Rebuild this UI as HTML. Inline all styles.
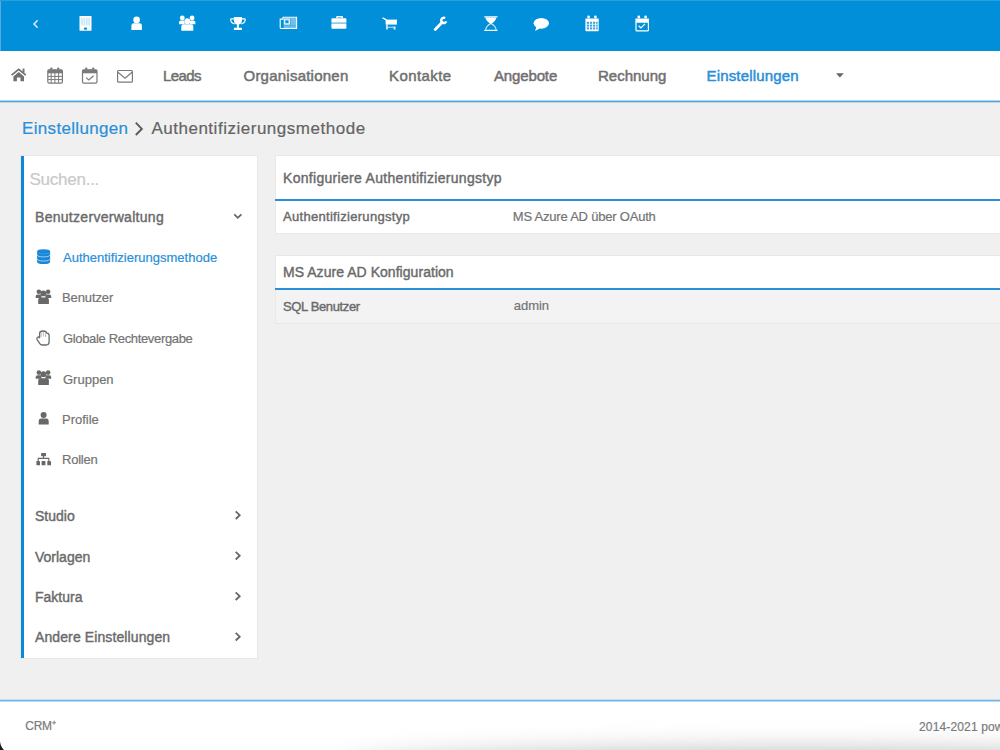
<!DOCTYPE html>
<html><head><meta charset="utf-8">
<style>
*{margin:0;padding:0;box-sizing:border-box}
html,body{width:1000px;height:750px;overflow:hidden}
body{position:relative;background:#f0f0f0;font-family:"Liberation Sans",sans-serif;color:#6b6b6b}
.a{position:absolute;white-space:nowrap}
#ov{position:absolute;left:0;top:0}
</style></head><body>
<div class="a" style="left:0;top:0;width:1000px;height:51px;background:#008fd8"></div>
<div class="a" style="left:0;top:51px;width:1000px;height:50px;background:#fff"></div>
<div class="a" style="left:0;top:0;width:1px;height:51px;background:#5aa9e2"></div>
<div class="a" style="left:0;top:0;width:1000px;height:1px;background:#2a9ddd"></div>
<div class="a" style="left:0;top:100px;width:1000px;height:3px;background:linear-gradient(#b3d6f0 0,#b3d6f0 1px,#52a5df 1px,#52a5df 2px,#bcd8ec 2px)"></div>

<!-- sidebar card -->
<div class="a" style="left:21px;top:156px;width:236px;height:502px;background:#fff;box-shadow:0 0 0 1px #e8e8e8"></div>
<div class="a" style="left:21px;top:156px;width:3px;height:502px;background:#0f87d8"></div>

<!-- panels -->
<div class="a" style="left:276px;top:156px;width:724px;height:77px;background:#fff;box-shadow:0 0 0 1px #e8e8e8"></div>
<div class="a" style="left:275px;top:199px;width:725px;height:2px;background:#2a8fd8"></div>
<div class="a" style="left:276px;top:256px;width:724px;height:67px;background:#fff;box-shadow:0 0 0 1px #e8e8e8"></div>
<div class="a" style="left:276px;top:290px;width:724px;height:33px;background:#f3f3f3"></div>
<div class="a" style="left:275px;top:288px;width:725px;height:2px;background:#2a8fd8"></div>

<!-- footer -->
<div class="a" style="left:0;top:701px;width:1000px;height:49px;background:#fff"></div>
<div class="a" style="left:0;top:699px;width:1000px;height:3px;background:linear-gradient(#c9dfee 0,#c9dfee 1px,#6fb4e4 1px,#6fb4e4 2px,#b5daf2 2px)"></div>

<svg id="ov" width="1000" height="750" viewBox="0 0 1000 750">
 <g fill="#fff" stroke="none">
  <!-- chevron left -->
  <path d="M37.6 20.2L34 24l3.6 3.8" fill="none" stroke="#fff" stroke-width="1.5" opacity=".85"/>
  <!-- building -->
  <rect x="79.5" y="16" width="12" height="14.8" rx=".5"/>
  <g fill="#008fd8" opacity=".22"><rect x="81.2" y="17.5" width="1.6" height="8"/><rect x="83.6" y="17.5" width="1.6" height="8"/><rect x="86" y="17.5" width="1.6" height="8"/><rect x="88.4" y="17.5" width="1.6" height="8"/></g>
  <rect x="83.9" y="27.6" width="3.2" height="2.2" rx="1" fill="#008fd8"/>
  <!-- user -->
  <circle cx="136.6" cy="19.9" r="3.3"/>
  <path d="M131.4 30V25.6q0-2.4 2.4-2.4h5.7q2.4 0 2.4 2.4V30z"/>
  <!-- users -->
  <circle cx="182.3" cy="17.9" r="2.4"/><circle cx="192.1" cy="17.9" r="2.4"/>
  <path d="M179 24.2v-1.8q0-1.9 1.9-1.9h3.2l.8 3.7z"/><path d="M195.4 24.2v-1.8q0-1.9-1.9-1.9h-3.2l-.8 3.7z"/>
  <circle cx="187.3" cy="21.2" r="2.9"/>
  <path d="M181.3 30.8v-4.2q0-2.4 2.4-2.4h7.2q2.4 0 2.4 2.4v4.2z"/>
  <!-- trophy -->
  <path d="M233.9 17h8.1v3q0 3.6-3.1 4.6v3.2h3v2.1h-8v-2.1h3v-3.2q-3-1-3-4.6z"/>
  <path d="M233.9 18.8h-2.6q-.6 0-.6.6q0 3.5 3.9 4.5M242 18.8h2.6q.6 0 .6.6q0 3.5-3.9 4.5" fill="none" stroke="#fff" stroke-width="1.2"/>
  <!-- newspaper -->
  <path d="M283 17.3h13.6v11.2H281q-.8 0-.8-.8v-8.6h2.8z" fill="none" stroke="#fff" stroke-width="1.1"/>
  <rect x="283.6" y="17.8" width="12.4" height="10.2" fill="#fff" opacity=".45"/>
  <circle cx="286.9" cy="21.7" r="1.3" fill="#008fd8"/>
  <path d="M284.4 19.2h5v4.8h-5z" fill="none" stroke="#fff" stroke-width=".9"/>
  <path d="M290.6 19v8M284.3 25.6h4.8M291.6 25.6h4" stroke="#008fd8" stroke-width=".8" opacity=".5"/>
  <!-- briefcase -->
  <path d="M336.2 18.3v-1.4q0-.9.9-.9h5q.9 0 .9.9v1.4h-1.3v-.9h-4.2v.9z"/>
  <path d="M331.4 22.4v-2.9q0-1.2 1.2-1.2h12.6q1.2 0 1.2 1.2v2.9z"/>
  <path d="M331.4 24.1h15v3.6q0 1.1-1.1 1.1h-12.8q-1.1 0-1.1-1.1z"/>
  <rect x="331.4" y="22.4" width="15" height="1.7" opacity=".55"/>
  <!-- cart -->
  <path d="M383 18.1l2.9 1.5" stroke="#fff" stroke-width="1.4" stroke-linecap="round" fill="none"/>
  <path d="M385.6 19.6h11.3v5h-11.3z"/>
  <path d="M386.1 24.6h1.7v5h-1.7zM393.6 26.5h1.9v3.1h-1.9z" opacity=".85"/>
  <rect x="387.8" y="26.6" width="6" height="1.4" opacity=".55"/>
  <!-- wrench -->
  <path d="M445.1 18.15A2.6 2.6 0 1 0 446.24 21.29" fill="none" stroke="#fff" stroke-width="2.4"/>
  <path d="M442.2 22.3l-7 7.1" stroke="#fff" stroke-width="2.8" stroke-linecap="round" fill="none"/>
  <!-- hourglass -->
  <path d="M484.3 16.2h13.2v1.3h-13.2zM484.3 29.7h13.2v1.3h-13.2z"/>
  <path d="M485.4 17.5q.6 3.6 5.5 6.4q4.9-2.8 5.5-6.4z"/>
  <path d="M485.7 29.7q.4-3.9 5.2-6.2q4.8 2.3 5.2 6.2" fill="none" stroke="#fff" stroke-width="1.2" opacity=".8"/>
  <!-- comment -->
  <ellipse cx="541.3" cy="23.3" rx="7.7" ry="5.4"/>
  <path d="M536.3 26.8l-1.2 4.1 4.8-2.4z"/>
  <!-- calendar top -->
  <g>
   <path d="M585.4 18.5h13.3v11.9q0 .8-.8.8h-11.7q-.8 0-.8-.8z"/>
   <circle cx="588.6" cy="17" r="1.4"/><circle cx="595.4" cy="17" r="1.4"/>
   <g fill="#008fd8" opacity=".8">
    <rect x="586.8" y="21.8" width="2.2" height="2"/><rect x="589.9" y="21.8" width="2.2" height="2"/><rect x="593" y="21.8" width="2.2" height="2"/><rect x="596.1" y="21.8" width="1.6" height="2"/>
    <rect x="586.8" y="24.6" width="2.2" height="2"/><rect x="589.9" y="24.6" width="2.2" height="2"/><rect x="593" y="24.6" width="2.2" height="2"/><rect x="596.1" y="24.6" width="1.6" height="2"/>
    <rect x="586.8" y="27.4" width="2.2" height="2"/><rect x="589.9" y="27.4" width="2.2" height="2"/><rect x="593" y="27.4" width="2.2" height="2"/><rect x="596.1" y="27.4" width="1.6" height="2"/>
   </g>
  </g>
  <!-- calendar check top -->
  <g>
   <path d="M635.4 18.5h13.5v4h-13.5z"/>
   <circle cx="638.8" cy="17" r="1.4"/><circle cx="645.6" cy="17" r="1.4"/>
   <rect x="636" y="21.8" width="12.4" height="9" fill="none" stroke="#fff" stroke-width="1.2" rx=".5"/>
   <path d="M638.6 25.7l2.3 2.2 4.1-4.1" fill="none" stroke="#fff" stroke-width="1.2"/>
  </g>
 </g>

 <!-- nav icons gray -->
 <g fill="#707070">
  <path d="M11.6 75.2l7.1-5.8 7.1 5.8" fill="none" stroke="#707070" stroke-width="1.7" stroke-linejoin="miter"/>
  <rect x="22.6" y="68.6" width="1.9" height="4"/>
  <path d="M13.4 76.4l5.3-4.5 5.3 4.5v4.9h-3.5v-3.7h-3.6v3.7h-3.5z"/>
  <!-- calendar -->
  <rect x="47.8" y="69.8" width="14.6" height="13.4" rx="1.4" fill="none" stroke="#7a7a7a" stroke-width="1.2"/>
  <rect x="47.8" y="69.8" width="14.6" height="3.5" fill="#7a7a7a"/>
  <circle cx="51.3" cy="68.6" r="1.2" fill="#7a7a7a"/><circle cx="58.2" cy="68.6" r="1.2" fill="#7a7a7a"/>
  <path d="M48 76.4h14.2M48 79.6h14.2M51.2 73v10M54.9 73v10M58.6 73v10" stroke="#7a7a7a" stroke-width="1"/>
  <!-- calendar check -->
  <rect x="82.5" y="69.8" width="14.5" height="13.4" rx="1.4" fill="none" stroke="#7a7a7a" stroke-width="1.2"/>
  <rect x="82.5" y="69.8" width="14.5" height="3.5" fill="#7a7a7a"/>
  <circle cx="86.2" cy="68.6" r="1.2" fill="#7a7a7a"/><circle cx="93.2" cy="68.6" r="1.2" fill="#7a7a7a"/>
  <path d="M86.1 77.6l2.7 2.4 4.8-4.3" fill="none" stroke="#7a7a7a" stroke-width="1.2"/>
  <!-- envelope -->
  <rect x="117.6" y="70.5" width="14.8" height="11.7" rx="1" fill="none" stroke="#7a7a7a" stroke-width="1.2"/>
  <path d="M117.9 72.2l7.1 6 7.1-6" fill="none" stroke="#7a7a7a" stroke-width="1.2"/>
  <!-- caret -->
  <path d="M836 73.2h7.8l-3.9 4.4z" fill="#666"/>
 </g>

 <!-- breadcrumb chevron -->
 <path d="M135.8 122.6l6 6.3-6 6.1" fill="none" stroke="#5a5a5a" stroke-width="1.9"/>

 <!-- sidebar icons -->
 <g fill="#1a86d6">
  <path d="M37.1 251.5q0-2.3 6.5-2.3t6.5 2.3v10.2q0 2.3-6.5 2.3t-6.5-2.3z"/>
  <path d="M37.1 251.6q0 2.2 6.5 2.2t6.5-2.2" fill="none" stroke="#4aa3e6" stroke-width=".6"/>
  <path d="M37.1 254.5q0 2.4 6.5 2.4t6.5-2.4M37.1 258.6q0 2.4 6.5 2.4t6.5-2.4" fill="none" stroke="#bfe0f7" stroke-width=".8"/>
 </g>
 <g fill="#686868">
  <!-- users -->
  <g id="usr">
   <circle cx="38.9" cy="291.8" r="2.3"/><circle cx="48.1" cy="291.8" r="2.3"/>
   <path d="M35.7 298v-1.6q0-1.9 1.9-1.9h3.6l.4 3.5z"/><path d="M51.2 298v-1.6q0-1.9-1.9-1.9h-3.6l-.4 3.5z"/>
   <circle cx="43.4" cy="293.4" r="2.9"/>
   <path d="M38.2 304.1v-4.2q0-2.5 2.5-2.5h5.7q2.5 0 2.5 2.5v4.2z"/>
  </g>
  <use href="#usr" y="80.8"/>
  <!-- profile -->
  <circle cx="43.6" cy="415.1" r="3"/>
  <path d="M38.7 424.4v-3.4q0-2.4 2.4-2.4h5.2q2.4 0 2.4 2.4v3.4z"/>
  <!-- sitemap -->
  <rect x="41.1" y="452.9" width="4.9" height="3.3" rx=".4"/>
  <path d="M43.5 456v3M38.2 461v-2.6h10.6v2.6" fill="none" stroke="#686868" stroke-width="1.1"/>
  <rect x="36.4" y="461" width="3.6" height="4.3" rx=".4"/><rect x="41.6" y="461" width="3.8" height="4.3" rx=".4"/><rect x="47.3" y="461" width="3.7" height="4.3" rx=".4"/>
 </g>
 <!-- hand -->
 <path d="M39.6 336.6v-3q0-2.6 3.4-2.6t3.8 2.2q2.3 0 2.3 2.4v6.2q0 3.2-3.2 3.2h-3.6q-1.6 0-2.5-1.3l-2.8-4.3q-.7-1.4.8-2.2q1.3-.6 1.8.6z" fill="none" stroke="#6a6a6a" stroke-width="1.3" stroke-linejoin="round"/>
 <path d="M41.2 332.4v4.5M43.4 332v4.5M45.6 332.6v4.5" stroke="#aaa" stroke-width=".8"/>

 <!-- chevrons -->
 <g fill="none" stroke="#666" stroke-width="1.8">
  <path d="M234.3 214.4l3.5 3.4 3.6-3.4"/>
  <path d="M235.7 511.4l4 3.8-4 3.8"/>
  <path d="M235.7 551.9l4 3.8-4 3.8"/>
  <path d="M235.7 592.4l4 3.8-4 3.8"/>
  <path d="M235.7 632.9l4 3.8-4 3.8"/>
 </g>
</svg>

<div class="a" style="left:345px;top:751px;width:900px;height:36px;background:#b8b8b8;border-radius:50%;filter:blur(13px)"></div>
<svg style="position:absolute;left:0;top:736px" width="10" height="14" viewBox="0 0 10 14"><path d="M0 5.5Q.6 11 4 14H0z" fill="#1a1a1a" style="filter:blur(.7px)"/></svg>
<div class="a t" id="nv1" style="left:163.10px;top:68.40px;font-size:15px;line-height:15px;color:#707070;letter-spacing:-0.600px;-webkit-text-stroke:0.50px #707070;">Leads</div>
<div class="a t" id="nv2" style="left:243.50px;top:68.40px;font-size:15px;line-height:15px;color:#707070;letter-spacing:0.231px;-webkit-text-stroke:0.50px #707070;">Organisationen</div>
<div class="a t" id="nv3" style="left:389.00px;top:68.40px;font-size:15px;line-height:15px;color:#707070;letter-spacing:0.429px;-webkit-text-stroke:0.50px #707070;">Kontakte</div>
<div class="a t" id="nv4" style="left:494.00px;top:68.40px;font-size:15px;line-height:15px;color:#707070;letter-spacing:-0.143px;-webkit-text-stroke:0.50px #707070;">Angebote</div>
<div class="a t" id="nv5" style="left:598.00px;top:68.40px;font-size:15px;line-height:15px;color:#707070;letter-spacing:0.000px;-webkit-text-stroke:0.50px #707070;">Rechnung</div>
<div class="a t" id="nv6" style="left:706.50px;top:68.40px;font-size:15px;line-height:15px;color:#2b8fd8;letter-spacing:0.167px;-webkit-text-stroke:0.50px #2b8fd8;">Einstellungen</div>
<div class="a t" id="bc1" style="left:22.00px;top:120.01px;font-size:17px;line-height:17px;color:#2b8fd8;letter-spacing:0.333px;-webkit-text-stroke:0.2px #2b8fd8;">Einstellungen</div>
<div class="a t" id="bc2" style="left:151.40px;top:120.01px;font-size:17px;line-height:17px;color:#646464;letter-spacing:0.517px;-webkit-text-stroke:0.2px #646464;">Authentifizierungsmethode</div>
<div class="a t" id="s0" style="left:29.50px;top:170.61px;font-size:17px;line-height:17px;color:#c9c9c9;letter-spacing:-0.250px;-webkit-text-stroke:0.2px #c9c9c9;">Suchen...</div>
<div class="a t" id="s1" style="left:35.00px;top:209.95px;font-size:14px;line-height:14px;color:#6a6a6a;letter-spacing:0.294px;-webkit-text-stroke:0.40px #6a6a6a;">Benutzerverwaltung</div>
<div class="a t" id="s2" style="left:63.00px;top:251.00px;font-size:13px;line-height:13px;color:#2a8fd8;letter-spacing:0.008px;-webkit-text-stroke:0.2px #2a8fd8;">Authentifizierungsmethode</div>
<div class="a t" id="s3" style="left:62.00px;top:291.30px;font-size:13px;line-height:13px;color:#747474;letter-spacing:-0.114px;-webkit-text-stroke:0.2px #747474;">Benutzer</div>
<div class="a t" id="s4" style="left:63.00px;top:331.90px;font-size:13px;line-height:13px;color:#747474;letter-spacing:-0.340px;-webkit-text-stroke:0.2px #747474;">Globale Rechtevergabe</div>
<div class="a t" id="s5" style="left:63.00px;top:372.80px;font-size:13px;line-height:13px;color:#747474;letter-spacing:0.000px;-webkit-text-stroke:0.2px #747474;">Gruppen</div>
<div class="a t" id="s6" style="left:62.00px;top:413.00px;font-size:13px;line-height:13px;color:#747474;letter-spacing:0.000px;-webkit-text-stroke:0.2px #747474;">Profile</div>
<div class="a t" id="s7" style="left:62.00px;top:453.40px;font-size:13px;line-height:13px;color:#747474;letter-spacing:-0.240px;-webkit-text-stroke:0.2px #747474;">Rollen</div>
<div class="a t" id="s8" style="left:35.00px;top:508.95px;font-size:14px;line-height:14px;color:#6a6a6a;letter-spacing:0.000px;-webkit-text-stroke:0.40px #6a6a6a;">Studio</div>
<div class="a t" id="s9" style="left:35.00px;top:549.50px;font-size:14px;line-height:14px;color:#6a6a6a;letter-spacing:0.000px;-webkit-text-stroke:0.40px #6a6a6a;">Vorlagen</div>
<div class="a t" id="s10" style="left:35.00px;top:589.85px;font-size:14px;line-height:14px;color:#6a6a6a;letter-spacing:0.000px;-webkit-text-stroke:0.40px #6a6a6a;">Faktura</div>
<div class="a t" id="s11" style="left:35.00px;top:630.35px;font-size:14px;line-height:14px;color:#6a6a6a;letter-spacing:0.105px;-webkit-text-stroke:0.40px #6a6a6a;">Andere Einstellungen</div>
<div class="a t" id="p1" style="left:283.00px;top:171.15px;font-size:14px;line-height:14px;color:#6a6a6a;letter-spacing:0.303px;-webkit-text-stroke:0.40px #6a6a6a;">Konfiguriere Authentifizierungstyp</div>
<div class="a t" id="p2" style="left:283.00px;top:210.20px;font-size:13px;line-height:13px;color:#6a6a6a;letter-spacing:0.300px;-webkit-text-stroke:0.40px #6a6a6a;">Authentifizierungstyp</div>
<div class="a t" id="p3" style="left:512.80px;top:210.40px;font-size:13px;line-height:13px;color:#747474;letter-spacing:-0.210px;-webkit-text-stroke:0.2px #747474;">MS Azure AD über OAuth</div>
<div class="a t" id="p4" style="left:283.00px;top:265.15px;font-size:14px;line-height:14px;color:#6a6a6a;letter-spacing:0.042px;-webkit-text-stroke:0.40px #6a6a6a;">MS Azure AD Konfiguration</div>
<div class="a t" id="p5" style="left:283.00px;top:299.50px;font-size:13px;line-height:13px;color:#6a6a6a;letter-spacing:-0.364px;-webkit-text-stroke:0.40px #6a6a6a;">SQL Benutzer</div>
<div class="a t" id="p6" style="left:513.80px;top:299.40px;font-size:13px;line-height:13px;color:#747474;letter-spacing:-0.050px;-webkit-text-stroke:0.2px #747474;">admin</div>
<div class="a t" id="f1" style="left:25.20px;top:720.34px;font-size:12px;line-height:12px;color:#7a7a7a;letter-spacing:-0.200px;-webkit-text-stroke:0.2px #7a7a7a;">CRM</div>
<div class="a t" id="f2" style="left:919.00px;top:721.14px;font-size:12px;line-height:12px;color:#7a7a7a;letter-spacing:0.150px;-webkit-text-stroke:0.2px #7a7a7a;">2014-2021 powered by</div>
<svg style="position:absolute;left:51px;top:719px" width="7" height="7" viewBox="51 719 7 7"><path d="M54.1 720.8v3.8M52.2 722.7h3.8" stroke="#888" stroke-width="1.1"/></svg>
</body></html>
